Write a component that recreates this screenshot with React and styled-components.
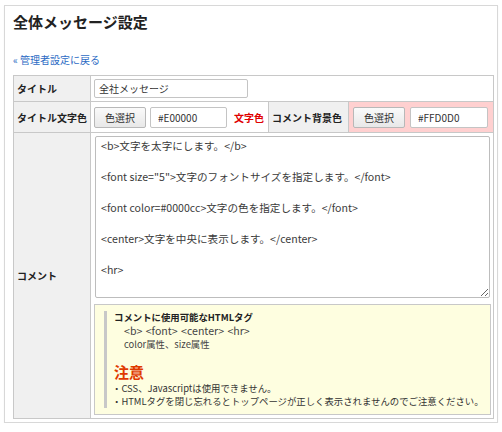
import styled, { createGlobalStyle } from 'styled-components'

const GlobalStyle = createGlobalStyle`
  body {
    margin: 0;
    background: #fff;
    font-family: 'Noto Sans CJK JP', 'Noto Sans', sans-serif;
    font-size: 10px;
    color: #333;
  }
`

const Panel = styled.div`
  box-sizing: border-box;
  width: 494px;
  height: 418px;
  margin: 5px 0 0 4px;
  padding: 5px 8px 0 8px;
  border: 1px solid #d8d8d8;
  box-shadow: 0 1px 1px rgba(0, 0, 0, 0.08);
`

const H1 = styled.h1`
  margin: 0;
  font-size: 15px;
  line-height: 22px;
  font-weight: 700;
  color: #222;
`

const BackLink = styled.a`
  display: block;
  margin-top: 19px;
  font-size: 10px;
  line-height: 16px;
  color: #2d6bc4;
  text-decoration: none;
`

const Table = styled.table`
  margin-top: 7px;
  width: 480px;
  border-collapse: collapse;
  table-layout: fixed;
`

const Th = styled.th`
  background: #f0f0f0;
  border: 1px solid #c8c8c8;
  text-align: left;
  font-weight: 700;
  padding: 0 3px;
  font-size: 10px;
  white-space: nowrap;
  color: #222;
`

const Td = styled.td`
  border: 1px solid #c8c8c8;
  background: ${p => p.$bg || '#fff'};
  padding: ${p => p.$pad || '0 3px'};
  vertical-align: middle;
`

const TextInput = styled.input`
  box-sizing: border-box;
  width: ${p => p.$w}px;
  height: ${p => p.$h || 20}px;
  border: 1px solid #c4c4c4;
  border-radius: 2px;
  padding: 0 ${p => p.$px || 4}px;
  font-family: inherit;
  font-size: 10px;
  color: #333;
  vertical-align: middle;
`

const Button = styled.button`
  box-sizing: border-box;
  width: 52px;
  height: 21px;
  padding: 0;
  border: 1px solid #b8b8b8;
  border-radius: 2px;
  background: linear-gradient(#fafafa, #e8e8e8);
  font-family: inherit;
  font-size: 10px;
  color: #333;
  vertical-align: middle;
`

const Row = styled.div`
  display: flex;
  align-items: center;
  gap: ${p => p.$gap || 4}px;
  white-space: nowrap;
`

const RedLabel = styled.span`
  margin-left: 3px;
  color: #e00000;
  font-weight: 700;
`

const TextArea = styled.textarea`
  display: block;
  box-sizing: border-box;
  width: 395px;
  height: 162px;
  margin: 3px 0 0 1px;
  padding: 1px 5px;
  border: 1px solid #bdbdbd;
  border-radius: 2px;
  font-family: inherit;
  font-size: 10.6px;
  line-height: 15.5px;
  color: #3a3a3a;
  resize: both;
`

const Note = styled.div`
  box-sizing: border-box;
  width: 397px;
  margin: 6px 0 3px 0;
  padding: 6px 8px 6px 9px;
  background: #fefee0;
  border: 1px solid #c8c8c8;
`

const NoteInner = styled.div`
  border-left: 3px solid #c8c8c8;
  padding-left: 7px;
  line-height: 13px;
  font-size: 9.4px;
  white-space: nowrap;
`

const NoteTitle = styled.div`
  font-weight: 700;
  color: #222;
`

const NoteIndent = styled.div`
  padding-left: 10px;
  color: #444;
  font-size: ${p => p.$size || 'inherit'};
  line-height: ${p => p.$lh || 'inherit'};
  word-spacing: ${p => p.$ws || 'normal'};
`

const Caution = styled.div`
  margin-top: 11px;
  font-size: 15px;
  line-height: 20px;
  font-weight: 700;
  color: #e03a00;
`

const Bullet = styled.div`
  color: #333;
  margin-left: -2px;
`

const comment = `<b>文字を太字にします。</b>

<font size="5">文字のフォントサイズを指定します。</font>

<font color=#0000cc>文字の色を指定します。</font>

<center>文字を中央に表示します。</center>

<hr>`

function App() {
  return (
    <>
      <GlobalStyle />
      <Panel>
        <H1>全体メッセージ設定</H1>
        <BackLink href="#">« 管理者設定に戻る</BackLink>
        <Table>
          <colgroup>
            <col style={{ width: 77 }} />
            <col style={{ width: 178 }} />
            <col style={{ width: 80 }} />
            <col style={{ width: 145 }} />
          </colgroup>
          <tbody>
            <tr>
              <Th style={{ height: 25 }}>タイトル</Th>
              <Td colSpan={3}>
                <TextInput $w={154} $h={19} defaultValue="全社メッセージ" />
              </Td>
            </tr>
            <tr>
              <Th style={{ height: 30 }}>タイトル文字色</Th>
              <Td>
                <Row>
                  <Button>色選択</Button>
                  <TextInput $w={77} $h={21} $px={7} defaultValue="#E00000" />
                  <RedLabel>文字色</RedLabel>
                </Row>
              </Td>
              <Th>コメント背景色</Th>
              <Td $bg="#ffd0d0" $pad="0 4px">
                <Row $gap={5}>
                  <Button>色選択</Button>
                  <TextInput $w={78} $h={21} $px={7} defaultValue="#FFD0D0" />
                </Row>
              </Td>
            </tr>
            <tr>
              <Th>コメント</Th>
              <Td colSpan={3} $pad="0 3px">
                <TextArea defaultValue={comment} spellCheck={false} />
                <Note>
                  <NoteInner>
                    <NoteTitle>コメントに使用可能なHTMLタグ</NoteTitle>
                    <NoteIndent $size="10.6px" $lh="14px" $ws="1px">&lt;b&gt; &lt;font&gt; &lt;center&gt; &lt;hr&gt;</NoteIndent>
                    <NoteIndent>color属性、size属性</NoteIndent>
                    <Caution>注意</Caution>
                    <Bullet>・CSS、Javascriptは使用できません。</Bullet>
                    <Bullet>・HTMLタグを閉じ忘れるとトップページが正しく表示されませんのでご注意ください。</Bullet>
                  </NoteInner>
                </Note>
              </Td>
            </tr>
          </tbody>
        </Table>
      </Panel>
    </>
  )
}

export default App
